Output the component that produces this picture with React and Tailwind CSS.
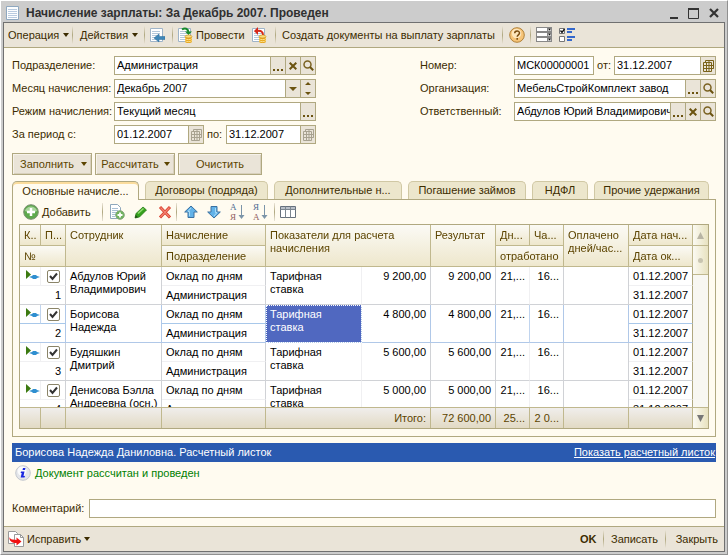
import React, { useState } from "react";
import clsx from "clsx";

const rows = [
  { id: 1, name: "Абдулов Юрий Владимирович", sum: "9 200,00" },
  { id: 2, name: "Борисова Надежда", sum: "4 800,00", active: true },
  { id: 3, name: "Будяшкин Дмитрий", sum: "5 600,00" },
  { id: 4, name: "Денисова Бэлла Андреевна (осн.)", sum: "5 000,00" },
];

const tabs = [
  { title: "Основные начисле...", width: "w-[127px]" },
  { title: "Договоры (подряда)", width: "w-[123px]" },
  { title: "Дополнительные н...", width: "w-[128px]" },
  { title: "Погашение займов", width: "w-[118px]" },
  { title: "НДФЛ", width: "w-[56px]" },
  { title: "Прочие удержания", width: "w-[115px]" },
];

/* ---------- icons ---------- */

const Icon = ({ size = 16, children }) => (
  <svg
    width={size}
    height={size}
    viewBox={`0 0 ${size} ${size}`}
    className="shrink-0"
    aria-hidden="true"
  >
    {children}
  </svg>
);

const Caret = () => (
  <svg width="6" height="4" viewBox="0 0 6 4" className="shrink-0" aria-hidden="true">
    <path d="M0 0h6L3 4z" fill="currentColor" />
  </svg>
);

const Sheet = () => (
  <>
    <path d="M1.5 1.5h12v13h-12z" fill="#fff" stroke="#9fb4c8" />
    <path d="M3 4.500h8M3 6.500h8M3 8.500h8M3 10.500h6M3 12.500h6" stroke="#b4c8da" />
  </>
);

const TitleIcon = () => (
  <Icon>
    <path d="M.5 1.500h12v13H.5z" fill="#fdfeff" stroke="#8fa8c0" />
    <path d="M2 4.500h9M2 6.500h9M2 8.500h9M2 10.500h9M2 12.500h9" stroke="#b9cbe0" />
  </Icon>
);

const GotoIcon = () => (
  <Icon>
    <Sheet />
    <path d="M5 11l5-4v2.500h6v3h-6V15z" fill="#3f87b8" stroke="#2b6a98" strokeWidth=".5" />
  </Icon>
);

const Coins = () => (
  <>
    <path d="M8 9.500v5c0 2 7 2 7 0v-5z" fill="#e8a820" />
    <path d="M8 11.500c1 1.500 6 1.500 7 0M8 13.500c1 1.500 6 1.500 7 0" stroke="#fbe08a" fill="none" />
    <ellipse cx="11.500" cy="9.500" rx="3.500" ry="1.500" fill="#fbdc78" stroke="#c88a18" strokeWidth=".6" />
  </>
);

const PostIcon = () => (
  <Icon>
    <Sheet />
    <path d="M5 2.500c3-2 6-1 6.500 2.500" stroke="#178a2c" strokeWidth="2" fill="none" />
    <path d="M8 4.500h7L11.500 8z" fill="#178a2c" />
    <Coins />
  </Icon>
);

const UnpostIcon = () => (
  <Icon>
    <Sheet />
    <path d="M6 4c4-1 6 1 6 4" stroke="#d82818" strokeWidth="2" fill="none" />
    <path d="M7 0v8L3 4z" fill="#d82818" />
    <Coins />
  </Icon>
);

const HelpIcon = () => (
  <Icon>
    <circle cx="8" cy="8" r="7.300" fill="#f6c478" stroke="#b08038" />
    <circle cx="7.500" cy="6.500" r="4.800" fill="#fde6bc" />
    <path
      d="M5.700 6.300c0-3 4.800-3 4.800-.2 0 1.700-2.300 1.700-2.300 3.600M8.200 11v1.700"
      stroke="#7a4c10"
      strokeWidth="1.500"
      fill="none"
    />
  </Icon>
);

const ListIcon = () => (
  <Icon>
    {[0, 5, 10].map((y) => (
      <g key={y} transform={`translate(0 ${y})`}>
        <path d="M0 0h16v5H0z" fill="#888" />
        <path d="M1 1h10v3H1z" fill="#fff" />
        <path d="M12 1h3v3h-3z" fill="#ccc" />
        <path d="M12 1.500h3L13.500 3.500z" fill="#111" />
      </g>
    ))}
  </Icon>
);

const SettingsIcon = () => (
  <Icon>
    <path d="M.5 1.500h5v5h-5zM.5 9.500h5v5h-5z" fill="#fff" stroke="#777" />
    <path d="M1.500 3.500l1.500 2 2.500-3.500" stroke="#111" strokeWidth="1.300" fill="none" />
    <path d="M8 1h8v2H8zM8 4h5v2H8zM8 9h8v2H8zM8 12h5v2H8z" fill="#3468cc" />
  </Icon>
);

const DotsIcon = () => (
  <svg width="10" height="2" viewBox="0 0 10 2" aria-hidden="true" className="mt-2">
    <path d="M0 0h2v2H0zM4 0h2v2H4zM8 0h2v2H8z" fill="#6b5310" />
  </svg>
);

const ClearIcon = () => (
  <svg width="8" height="8" viewBox="0 0 8 8" aria-hidden="true">
    <path d="M.7.700l6.600 6.600M7.300.700L.7 7.300" stroke="#6b5310" strokeWidth="2" />
  </svg>
);

const SearchIcon = () => (
  <svg width="11" height="11" viewBox="0 0 11 11" aria-hidden="true">
    <circle cx="4.500" cy="4.500" r="3.500" fill="none" stroke="#7a6222" strokeWidth="1.500" />
    <path d="M7 7l3.200 3.200" stroke="#6b5310" strokeWidth="2" />
  </svg>
);

const CalendarIcon = ({ muted }) => (
  <svg width="11" height="12" viewBox="0 0 11 12" aria-hidden="true">
    <path
      d="M2.500 2.500v-2h8v8h-2M.5 2.500h8v9h-8zM3.500 2.500v9M6 .5v11M.5 5.500h10M.5 8.500h10"
      fill="none"
      stroke={muted ? "#a8a290" : "#7a6218"}
    />
  </svg>
);

const AddIcon = () => (
  <Icon>
    <circle cx="8" cy="8" r="7.300" fill="#5da94c" stroke="#7d8f74" />
    <path d="M2 7c1-6 11-6 12 0-4 2-8 2-12 0z" fill="#a9d59c" />
    <path d="M8 4v8M4 8h8" stroke="#fff" strokeWidth="2.500" />
  </Icon>
);

const CopyIcon = () => (
  <Icon>
    <path d="M1.500.500h7l3 3v11h-10z" fill="#fff" stroke="#8fa8bc" />
    <path d="M3 4.500h6M3 6.500h6M3 8.500h6M3 10.500h4M3 12.500h3" stroke="#a9c0d4" />
    <circle cx="11" cy="11" r="4.300" fill="#6fb45c" stroke="#8aa880" />
    <path d="M11 8.500v5M8.500 11h5" stroke="#fff" strokeWidth="1.800" />
  </Icon>
);

const PencilIcon = () => (
  <Icon>
    <path d="M3 9.500L10 3l3.500 3-7 7L2 14z" fill="#35a01c" stroke="#1d7410" strokeWidth=".7" />
    <path d="M5 9.500l5.500-5" stroke="#90dc70" strokeWidth="1.500" />
    <path d="M2 14l.7-3 2.300 2.300z" fill="#234a18" />
  </Icon>
);

const DeleteIcon = () => (
  <Icon>
    <path d="M3 3l10 10.500M13 3L3 13.500" stroke="#d83e2c" strokeWidth="3" />
    <path d="M3.500 3.500l9 9.500M12.500 3.500l-9 9.500" stroke="#f48272" strokeWidth="1.200" />
  </Icon>
);

const ArrowIcon = ({ down }) => (
  <Icon>
    <g transform={down ? "rotate(180 8 8)" : undefined}>
      <path d="M8 2l6.300 6H11v5.500H5V8H1.700z" fill="#62b2e8" stroke="#3a70a0" />
      <path d="M8 4L5 7.500h1.500V12" stroke="#a8dcf8" fill="none" />
    </g>
  </Icon>
);

// sort buttons: two letters one above another and an arrow
const SortIcon = ({ first, second }) => (
  <svg width="16" height="20" viewBox="0 0 16 20" className="shrink-0" aria-hidden="true">
    <text x="1" y="8" fontSize="9" fontFamily="Liberation Serif, serif" fill="#506c90">
      {first}
    </text>
    <text x="1" y="18" fontSize="9" fontFamily="Liberation Serif, serif" fill="#906060">
      {second}
    </text>
    <path d="M12.500 3v13" stroke="#7c94a8" />
    <path d="M9.500 13h6l-3 4z" fill="#7c94a8" />
  </svg>
);

const TableIcon = () => (
  <Icon>
    <path d="M.5 2.500h15v11H.5z" fill="#fff" stroke="#66707c" />
    <path d="M1 3h14v2H1z" fill="#b8bec6" />
    <path d="M.5 5.500h15M5.500 2.500v11M10.500 2.500v11" stroke="#7c868f" />
  </Icon>
);

const StateIcon = () => (
  <svg width="15" height="11" viewBox="0 0 15 11" aria-label="Проведен">
    <path d="M1 0l5 4.500L1 9z" fill="#3c7a10" />
    <path d="M4 7l3-1 1-1h3l1 1 3 1-3 1-1 1H8L7 8z" fill="#2f8fd0" />
  </svg>
);

const InfoIcon = () => (
  <Icon>
    <circle cx="8" cy="8" r="7.300" fill="#e4e6ea" stroke="#c4c8ce" />
    <circle cx="7" cy="6" r="4.500" fill="#fafbfc" />
    <path d="M8 3h2.500l-.5 2H7.500zM6 6.500h3.500L8.500 11H10l-.5 1.500H5.700l1-4.500H5.600z" fill="#1a28e0" />
  </Icon>
);

const FixIcon = () => (
  <Icon>
    <path d="M.5.500h7l2 2v10h-9z" fill="#fff" stroke="#999" />
    <path d="M6.500 3.500h6l3 3v9h-9z" fill="#fff" stroke="#999" />
    <path d="M12.500 3.500v3h3" fill="none" stroke="#999" />
    <path d="M1.500 6c1 3 4 2.500 7 3V6.500l5 4-5 4V12C4 12 1 10 1.500 6z" fill="#f01010" />
  </Icon>
);

/* ---------- small controls ---------- */

const Separator = () => (
  <span className="h-[18px] w-px shrink-0 bg-gradient-to-b from-[#eae4d8] via-[#b0a880] to-[#eae4d8]" />
);

const ToolButton = ({ className, label, children }) => (
  <button
    type="button"
    aria-label={label}
    className={clsx("flex items-center whitespace-nowrap", className)}
  >
    {children}
  </button>
);

const CellButton = ({ label, children }) => (
  <button
    type="button"
    aria-label={label}
    className="flex w-[15px] shrink-0 items-center justify-center border-l border-[#b0a880] bg-[#eae4d8] text-[#6b5310]"
  >
    {children}
  </button>
);

const Box = ({ className, children }) => (
  <div className={clsx("flex h-[19px] border border-[#b0a880] bg-white", className)}>
    {children}
  </div>
);

const inputStyle = "w-full min-w-0 flex-1 bg-transparent pl-[2px] text-black outline-none";

const Lookup = ({ id, label, labelWidth, value, clear, search = true }) => (
  <div className="flex items-center">
    <label htmlFor={id} className={clsx("shrink-0 whitespace-nowrap", labelWidth)}>
      {label}
    </label>
    <Box className="w-[202px]">
      <input id={id} defaultValue={value} className={inputStyle} />
      <CellButton label="Выбрать">
        <DotsIcon />
      </CellButton>
      {clear && (
        <CellButton label="Очистить поле">
          <ClearIcon />
        </CellButton>
      )}
      {search && (
        <CellButton label="Открыть">
          <SearchIcon />
        </CellButton>
      )}
    </Box>
  </div>
);

const PushButton = ({ className, caret, children }) => (
  <button
    type="button"
    className={clsx(
      "flex h-[22px] items-center justify-center border border-[#b0a880] bg-[#eae4d8] text-[#5c4400] shadow-[inset_1px_1px_0_#f6f2ea,inset_-1px_-1px_0_#d8d0bc]",
      className
    )}
  >
    <span className={caret ? "flex-1 text-center" : ""}>{children}</span>
    {caret && <Caret />}
  </button>
);

const Th = ({ className, children, ...rest }) => (
  <th
    className={clsx(
      "overflow-hidden border-r border-b border-[#c0b88e] bg-gradient-to-b from-[#fbfaf5] to-[#eee7cc] px-[4px] pt-[4px] pb-[2px] text-left align-top leading-[13px] font-normal text-[#5c4400]",
      className
    )}
    {...rest}
  >
    {children}
  </th>
);

const Employee = ({ row }) => {
  const line = row.active ? "border-[#b0c8e8]" : "border-[#d0d2d6]";
  const inner = row.active
    ? "border-r-[#c0d4ee] border-b-[#a8c8ea]"
    : "border-r-[#f0f0f2] border-b-[#f0f0f2]";
  const soft = row.active
    ? "border-r-[#c0d4ee] border-b-[#b0c8e8]"
    : "border-r-[#f0f0f2] border-b-[#d0d2d6]";
  const subRight = row.active ? "border-r-[#b0c8e8]" : "border-r-[#d0d2d6]";
  const subBottom = row.active ? "border-b-[#a8c8ea]" : "border-b-[#f0f0f2]";
  const cell = "overflow-hidden border-b border-r pl-[4px] pt-[3px] align-top leading-[13px] ";

  return (
    <>
      <tr className="h-[19px]">
        <td className={clsx("border-r border-b pl-[5px] align-top", inner)}>
          <span className="mt-[3px] block">
            <StateIcon />
          </span>
        </td>
        <td className={clsx("border-r border-b p-0 align-middle", subRight, subBottom)}>
          <label className="relative mx-auto block size-[13px]">
            <input
              type="checkbox"
              defaultChecked
              aria-label={row.name}
              className="peer block size-[13px] appearance-none rounded-[2px] border border-[#8a8468] bg-white"
            />
            <svg
              width="13"
              height="13"
              viewBox="0 0 13 13"
              className="pointer-events-none absolute inset-0 hidden peer-checked:block"
              aria-hidden="true"
            >
              <path d="M3 6l2.500 3L10 3.500" fill="none" stroke="#333" strokeWidth="2" />
            </svg>
          </label>
        </td>
        <td rowSpan={2} className={clsx(cell, line)}>
          {row.name}
        </td>
        <td className={clsx(cell, "whitespace-nowrap", subRight, subBottom)}>Оклад по дням</td>
        <td
          rowSpan={2}
          className={clsx(
            cell,
            row.active
              ? "border-[#b0c8e8] bg-[#5068c0] text-white outline-1 -outline-offset-1 outline-dotted outline-white"
              : soft
          )}
        >
          Тарифная
          <br />
          ставка
        </td>
        <td rowSpan={2} className={clsx(cell, "pr-[4px] text-right", line)}>
          {row.sum}
        </td>
        <td rowSpan={2} className={clsx(cell, "pr-[4px] text-right", line)}>
          {row.sum}
        </td>
        <td rowSpan={2} className={clsx(cell, "pr-[4px] text-right", soft)}>
          21,...
        </td>
        <td rowSpan={2} className={clsx(cell, "pr-[4px] text-right", line)}>
          16...
        </td>
        <td rowSpan={2} className={clsx(cell, line)} />
        <td className={clsx(cell, "border-r-[#b0a880]", subBottom)}>01.12.2007</td>
      </tr>
      <tr className="h-[19px]">
        <td colSpan={2} className={clsx(cell, "pr-[4px] text-right", line)}>
          {row.id}
        </td>
        <td className={clsx(cell, line)}>Администрация</td>
        <td className={clsx(cell, "border-r-[#b0a880]", row.active ? "border-b-[#b0c8e8]" : "border-b-[#d0d2d6]")}>
          31.12.2007
        </td>
      </tr>
    </>
  );
};

const App = () => {
  const [tab, setTab] = useState(0);
  const foot =
    "h-[21px] border-t border-r border-[#c0b88e] bg-gradient-to-b from-[#f0eeec] to-[#e2dac4] px-[4px] py-0 text-right text-[#5c4400] whitespace-nowrap";

  return (
    <div className="flex h-screen min-w-[728px] flex-col border border-t-white border-r-[#909090] border-b-[#909090] border-l-white bg-[#cccccc] px-[2px] pb-[2px] font-['Liberation_Sans',Arial,sans-serif] text-[11px] leading-[15px] text-[#3c2c00]">
      {/* Title bar */}
      <header className="flex h-[21px] shrink-0 items-center pt-[3px] pr-[6px] pl-[3px]">
        <TitleIcon />
        <h1 className="flex-1 pl-[4px] text-[12px] font-bold text-[#303030]">
          Начисление зарплаты: За Декабрь 2007. Проведен
        </h1>
        <div className="flex items-center gap-[10px]">
          <button type="button" aria-label="Свернуть">
            <svg width="8" height="11" viewBox="0 0 8 11">
              <path d="M0 9h8v2H0z" fill="#333" />
            </svg>
          </button>
          <button type="button" aria-label="Развернуть">
            <svg width="11" height="11" viewBox="0 0 11 11">
              <path d="M.5 1h10v9.500H.5z" fill="none" stroke="#333" />
              <path d="M0 0h11v2H0z" fill="#333" />
            </svg>
          </button>
          <button type="button" aria-label="Закрыть окно">
            <svg width="10" height="10" viewBox="0 0 10 10">
              <path d="M1 1l8 8M9 1L1 9" stroke="#333" strokeWidth="2.200" />
            </svg>
          </button>
        </div>
      </header>

      <div className="flex min-h-0 flex-1 flex-col border border-[#707070] bg-[#fffbf0]">
        {/* Command bar */}
        <nav className="flex h-[25px] shrink-0 items-center border-b border-[#b0a880] bg-[#eae4d8]">
          <ToolButton className="w-[68px] gap-[4px] pl-[4px]">
            Операция <Caret />
          </ToolButton>
          <Separator />
          <ToolButton className="w-[71px] gap-[4px] pl-[7px]">
            Действия <Caret />
          </ToolButton>
          <Separator />
          <ToolButton className="w-[27px] pl-[4px]" label="Перейти">
            <GotoIcon />
          </ToolButton>
          <Separator />
          <ToolButton className="w-[78px] gap-[3px] pl-[4px]">
            <PostIcon /> Провести
          </ToolButton>
          <ToolButton className="w-[24px]" label="Отмена проведения">
            <UnpostIcon />
          </ToolButton>
          <Separator />
          <ToolButton className="w-[226px] pl-[6px]">
            Создать документы на выплату зарплаты
          </ToolButton>
          <Separator />
          <ToolButton className="w-[27px] justify-center" label="Справка">
            <HelpIcon />
          </ToolButton>
          <Separator />
          <ToolButton className="w-[26px] justify-center" label="Список">
            <ListIcon />
          </ToolButton>
          <ToolButton className="w-[20px] justify-center" label="Настройка">
            <SettingsIcon />
          </ToolButton>
        </nav>

        <main className="flex min-h-0 flex-1 flex-col px-[8px] pt-[8px]">
          <form className="shrink-0">
            <div className="flex justify-between">
              <div className="flex flex-col gap-[4px]">
                <Lookup id="dept" label="Подразделение:" labelWidth="w-[102px]" value="Администрация" clear />
                <div className="flex items-center">
                  <label htmlFor="month" className="w-[102px] whitespace-nowrap">
                    Месяц начисления:
                  </label>
                  <Box className="w-[202px]">
                    <div className="relative flex flex-1">
                      <select id="month" className="w-full appearance-none pl-[2px] text-black outline-none">
                        <option>Декабрь 2007</option>
                        <option>Ноябрь 2007</option>
                      </select>
                      <span className="pointer-events-none absolute inset-y-0 right-0 flex w-[15px] items-center justify-center border-l border-[#b0a880] bg-[#eae4d8] text-[#6b5310]">
                        <svg width="8" height="4" viewBox="0 0 8 4" aria-hidden="true">
                          <path d="M0 0h8L4 4z" fill="currentColor" />
                        </svg>
                      </span>
                    </div>
                    <CellButton label="Изменить месяц">
                      <svg width="6" height="13" viewBox="0 0 6 13" aria-hidden="true">
                        <path d="M0 3h6L3 0zM0 10h6L3 13z" fill="currentColor" />
                      </svg>
                    </CellButton>
                  </Box>
                </div>
                <Lookup id="mode" label="Режим начисления:" labelWidth="w-[102px]" value="Текущий месяц" search={false} />
                <div className="flex items-center">
                  <label htmlFor="from" className="w-[102px] whitespace-nowrap">
                    За период с:
                  </label>
                  <Box className="w-[90px]">
                    <input id="from" defaultValue="01.12.2007" className={inputStyle} />
                    <CellButton label="Календарь">
                      <CalendarIcon muted />
                    </CellButton>
                  </Box>
                  <label htmlFor="to" className="w-[22px] pl-[3px]">
                    по:
                  </label>
                  <Box className="w-[90px]">
                    <input id="to" defaultValue="31.12.2007" className={inputStyle} />
                    <CellButton label="Календарь">
                      <CalendarIcon muted />
                    </CellButton>
                  </Box>
                </div>
              </div>

              <div className="flex flex-col gap-[4px]">
                <div className="flex items-center">
                  <label htmlFor="number" className="w-[94px]">
                    Номер:
                  </label>
                  <Box className="w-[80px]">
                    <input id="number" defaultValue="МСК00000001" className={inputStyle} />
                  </Box>
                  <label htmlFor="date" className="w-[20px] pl-[3px]">
                    от:
                  </label>
                  <Box className="w-[102px]">
                    <input id="date" defaultValue="31.12.2007" className={inputStyle} />
                    <CellButton label="Календарь">
                      <CalendarIcon />
                    </CellButton>
                  </Box>
                </div>
                <Lookup id="org" label="Организация:" labelWidth="w-[94px]" value="МебельСтройКомплект завод" />
                <Lookup id="resp" label="Ответственный:" labelWidth="w-[94px]" value="Абдулов Юрий Владимирович" clear />
              </div>
            </div>

            <div className="mt-[9px] flex gap-[3px]">
              <PushButton caret className="w-[80px] pr-[4px]">
                Заполнить
              </PushButton>
              <PushButton caret className="w-[80px] pr-[4px]">
                Рассчитать
              </PushButton>
              <PushButton className="w-[84px]">Очистить</PushButton>
            </div>
          </form>

          {/* Tabs */}
          <div role="tablist" className="mt-[6px] flex shrink-0 gap-[6px]">
            {tabs.map((item, index) => (
              <button
                key={item.title}
                type="button"
                role="tab"
                aria-selected={tab === index}
                onClick={() => setTab(index)}
                className={clsx(
                  "h-[18px] overflow-hidden rounded-t-[5px] border border-b-0 text-center whitespace-nowrap",
                  item.width,
                  tab === index
                    ? "relative z-10 -mb-px h-[19px] border-[#b0a880] bg-[#fffbf0] shadow-[inset_0_2px_0_#fbdc9c]"
                    : "border-[#d0c8a4] bg-[#ece6cc]"
                )}
              >
                {item.title}
              </button>
            ))}
          </div>

          <section className="flex min-h-0 flex-1 flex-col border border-[#b0a880] px-[6px] pb-[7px]">
            <div className="flex h-[24px] shrink-0 items-center">
              <ToolButton className="w-[83px] gap-[3px] pl-[4px]">
                <AddIcon />
                <span>
                  <u>Д</u>обавить
                </span>
              </ToolButton>
              <Separator />
              <div className="flex w-[73px] items-center gap-[8px] pl-[6px]">
                <ToolButton label="Скопировать"><CopyIcon /></ToolButton>
                <ToolButton label="Изменить"><PencilIcon /></ToolButton>
                <ToolButton label="Удалить"><DeleteIcon /></ToolButton>
              </div>
              <Separator />
              <div className="flex w-[97px] items-center gap-[7px] pl-[6px]">
                <ToolButton label="Вверх"><ArrowIcon /></ToolButton>
                <ToolButton label="Вниз"><ArrowIcon down /></ToolButton>
                <ToolButton label="По возрастанию"><SortIcon first="А" second="Я" /></ToolButton>
                <ToolButton label="По убыванию"><SortIcon first="Я" second="А" /></ToolButton>
              </div>
              <Separator />
              <ToolButton className="pl-[5px]" label="Колонки">
                <TableIcon />
              </ToolButton>
            </div>

            <div className="flex min-h-0 flex-1 border border-[#b0a880] bg-white">
              <div className="min-w-0 flex-1 overflow-y-auto [scrollbar-width:none]">
                <table className="w-full table-fixed border-separate border-spacing-0 text-black">
                  <colgroup>
                    <col className="w-[21px]" />
                    <col className="w-[25px]" />
                    <col className="w-[96px]" />
                    <col className="w-[104px]" />
                    <col className="w-[96px]" />
                    <col className="w-[69px]" />
                    <col className="w-[65px]" />
                    <col className="w-[34px]" />
                    <col className="w-[34px]" />
                    <col className="w-[65px]" />
                    <col className="w-[64px]" />
                  </colgroup>
                  <thead className="sticky top-0 z-10">
                    <tr className="h-[21px]">
                      <Th>К..</Th>
                      <Th>П...</Th>
                      <Th rowSpan={2}>Сотрудник</Th>
                      <Th>Начисление</Th>
                      <Th rowSpan={2} colSpan={2}>
                        Показатели для расчета
                        <br />
                        начисления
                      </Th>
                      <Th rowSpan={2}>Результат</Th>
                      <Th>Дн...</Th>
                      <Th>Ча...</Th>
                      <Th rowSpan={2} className="text-center whitespace-nowrap">
                        Оплачено
                        <br />
                        дней/час...
                      </Th>
                      <Th className="whitespace-nowrap">Дата нач...</Th>
                    </tr>
                    <tr className="h-[21px]">
                      <Th colSpan={2}>№</Th>
                      <Th>Подразделение</Th>
                      <Th colSpan={2}>отработано</Th>
                      <Th className="whitespace-nowrap">Дата ок...</Th>
                    </tr>
                  </thead>
                  <tbody>
                    {rows.map((row) => (
                      <Employee key={row.id} row={row} />
                    ))}
                  </tbody>
                  <tfoot className="sticky bottom-0 z-10">
                    <tr>
                      <td className={foot} />
                      <td className={foot} />
                      <td className={foot} />
                      <td className={foot} />
                      <td colSpan={2} className={foot}>Итого:</td>
                      <td className={foot}>72 600,00</td>
                      <td className={foot}>25...</td>
                      <td className={foot}>2 0...</td>
                      <td className={foot} />
                      <td className={foot} />
                    </tr>
                  </tfoot>
                </table>
              </div>

              {/* Scroll bar */}
              <div className="flex w-[15px] shrink-0 flex-col bg-[#f8f7f2]">
                <button
                  type="button"
                  aria-label="Прокрутить вверх"
                  className="flex h-[21px] items-center justify-center border-b border-[#c0b88e] bg-gradient-to-r from-[#fbfaf2] to-[#e8e2c0] text-[#b8b4a4]"
                >
                  <svg width="7" height="7" viewBox="0 0 7 7" aria-hidden="true">
                    <path d="M0 7h7L3.500 0z" fill="currentColor" />
                  </svg>
                </button>
                <div className="flex h-[29px] items-center justify-center border-b border-[#c0b88e] bg-gradient-to-r from-[#fbfaf2] to-[#e8e2c0]">
                  <span className="size-[5px] rounded-full bg-[#c8c4b0]" />
                </div>
                <div className="flex-1" />
                <button
                  type="button"
                  aria-label="Прокрутить вниз"
                  className="flex h-[21px] items-center justify-center border-t border-[#c0b88e] bg-gradient-to-r from-[#fbfaf2] to-[#e8e2c0] text-[#777]"
                >
                  <svg width="7" height="7" viewBox="0 0 7 7" aria-hidden="true">
                    <path d="M0 0h7L3.500 7z" fill="currentColor" />
                  </svg>
                </button>
              </div>
            </div>
          </section>

          {/* Payslip line */}
          <div className="mt-[6px] flex h-[19px] shrink-0 items-center justify-between bg-[#2a5ab0] pr-px pl-[3px] text-white">
            <span>Борисова Надежда Даниловна. Расчетный листок</span>
            <a href="#" className="underline">
              Показать расчетный листок
            </a>
          </div>
          <p className="mt-[2px] flex h-[18px] shrink-0 items-center gap-[4px] pl-[3px] text-[#008000]">
            <InfoIcon />
            Документ рассчитан и проведен
          </p>
          <div className="mt-[17px] mb-[8px] flex shrink-0 items-center">
            <label htmlFor="comment" className="w-[77px]">
              Комментарий:
            </label>
            <Box className="flex-1">
              <input id="comment" className={inputStyle} />
            </Box>
          </div>
        </main>

        <footer className="flex h-[25px] shrink-0 items-center border-t border-[#b0a880] bg-[#eae4d8] pr-[6px] pl-[4px]">
          <ToolButton className="gap-[3px]">
            <FixIcon /> Исправить <Caret />
          </ToolButton>
          <div className="flex-1" />
          <ToolButton className="w-[23px] font-bold">OK</ToolButton>
          <Separator />
          <ToolButton className="w-[61px] justify-center">Записать</ToolButton>
          <Separator />
          <ToolButton className="w-[52px] justify-end">Закрыть</ToolButton>
        </footer>
      </div>
    </div>
  );
};

export default App;
